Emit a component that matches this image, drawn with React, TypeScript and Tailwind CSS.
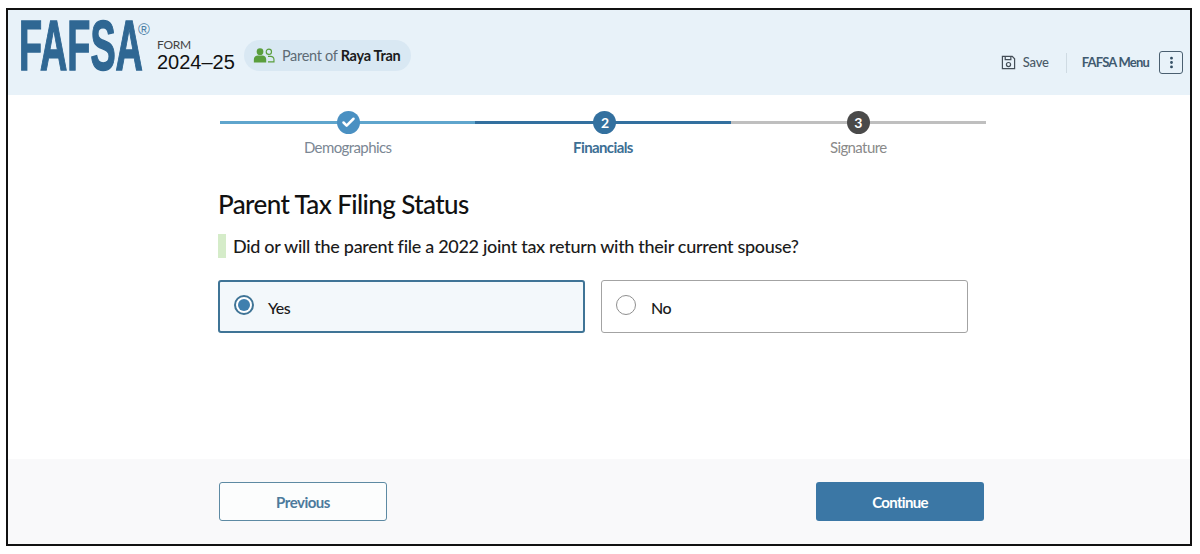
import { Check, EllipsisVertical } from 'lucide-react';

const bodyFont = "font-['Lato',sans-serif]";

function Step({ label, tone, num }: { label: string; tone: 'done' | 'current' | 'todo'; num?: number }) {
  const line = tone === 'done' ? 'bg-[#5fa5cd]' : tone === 'current' ? 'bg-[#33709f]' : 'bg-[#bfbfbf]';
  const circle = tone === 'done' ? 'bg-[#4a90c2] translate-x-[1px]' : tone === 'current' ? 'bg-[#33709f] translate-x-[2px]' : 'bg-[#4a4a4a]';
  const text =
    tone === 'done'
      ? 'text-[#7b8794]'
      : tone === 'current'
        ? 'text-[#3d6f94] font-bold'
        : 'text-[#8a8a8a]';
  return (
    <div className="flex w-[255.3px] flex-col items-center">
      <div className="relative flex h-[23px] w-full items-center justify-center">
        <div className={`absolute inset-x-0 top-[10px] h-[3px] ${line}`} />
        <div className={`relative flex h-[23px] w-[23px] items-center justify-center rounded-full ${circle}`}>
          {num ? (
            <span className="text-[14px] font-bold text-white">{num}</span>
          ) : (
            <Check className="h-[15px] w-[15px] text-white" strokeWidth={4} />
          )}
        </div>
      </div>
      <span className={`mt-[3px] text-[15px] leading-[20px] tracking-[-0.6px] ${text}`}>{label}</span>
    </div>
  );
}

function RadioCard({ label, selected }: { label: string; selected?: boolean }) {
  return (
    <div
      className={`flex h-[53px] w-[367px] items-center rounded-[3px] ${
        selected ? 'border-2 border-[#3f7496] bg-[#f3f8fb] pl-[14px]' : 'border border-[#a3a3a3] bg-white pl-[14px]'
      }`}
    >
      {selected ? (
        <span className="mb-[4px] flex h-[20px] w-[20px] items-center justify-center rounded-full border-2 border-[#3f7496] bg-white">
          <span className="h-[12px] w-[12px] rounded-full bg-[#3f7fae]" />
        </span>
      ) : (
        <span className="mb-[4px] h-[20px] w-[20px] rounded-full border border-[#8f8f8f] bg-white" />
      )}
      <span className={`mt-[2px] text-[16px] font-medium tracking-[-0.5px] text-[#1b1b1b] ${selected ? 'ml-[14px]' : 'ml-[15px]'}`}>
        {label}
      </span>
    </div>
  );
}

export default function App() {
  return (
    <div className={`h-[554px] w-[1200px] overflow-hidden bg-white pb-[8px] pl-[6px] pr-[8px] pt-[8px] ${bodyFont}`}>
      <div className="flex h-[538px] flex-col border-2 border-[#111111] bg-white">
        {/* Header */}
        <header className="flex h-[85px] items-start justify-between bg-[#e8f2f9] pl-[11px] pr-[7px]">
          <div className="flex items-start">
            <div className="relative mt-[9px] h-[52px] w-[129px]">
              <span className="block origin-top-left scale-x-[0.54] font-['Liberation_Sans',sans-serif] text-[70px] font-bold leading-[54px] text-[#2f6793] [-webkit-text-stroke:1.5px_#2f6793]">
                FAFSA
              </span>
              <span className="absolute left-[119px] top-[3px] font-['Liberation_Sans',sans-serif] text-[16px] leading-[16px] text-[#4b7fa6]">®</span>
            </div>
            <div className="ml-[9px] mt-[29px] flex flex-col">
              <span className="text-[12px] leading-[12px] tracking-[-0.3px] text-[#444444]">FORM</span>
              <span className="font-['Liberation_Sans',sans-serif] text-[20px] leading-[22px] text-[#111111]">2024–25</span>
            </div>
            <div className="ml-[9px] mt-[30px] flex h-[31px] w-[167px] items-center rounded-[16px] bg-[#d9e8f3] pl-[9px]">
              <svg viewBox="0 0 24 17" className="h-[15px] w-[22px]" aria-hidden="true">
                <circle cx="7.5" cy="4.2" r="3.8" fill="#5a9e3d" />
                <path d="M0.5 16.5v-3.5c0-2.6 2-4.4 4.5-4.4h5c2.5 0 4.5 1.8 4.5 4.4v3.5z" fill="#5a9e3d" />
                <circle cx="17.5" cy="4.2" r="3" fill="none" stroke="#5a9e3d" strokeWidth="1.3" />
                <path d="M16.5 15.8h6.8v-2.6c0-2.2-1.6-3.7-3.8-3.7h-3" fill="none" stroke="#5a9e3d" strokeWidth="1.3" />
              </svg>
              <span className="ml-[7px] text-[14.5px] tracking-[-0.3px] text-[#5e6b75]">
                Parent of <span className="font-bold text-[#1b1b1b]">Raya Tran</span>
              </span>
            </div>
          </div>
          <div className="mt-[41px] flex items-center">
            <svg viewBox="0 0 16 16" className="h-[15px] w-[15px]" fill="none" stroke="#444e57" strokeWidth="1.3" aria-hidden="true">
              <path d="M1.5 1.5h10.5l2.5 2.5v10.5h-13z" />
              <path d="M4.5 1.5v3.5h6v-3.5" />
              <circle cx="8" cy="10.2" r="2.2" />
            </svg>
            <span className="ml-[7px] text-[13px] font-medium tracking-[-0.2px] text-[#4a5a68]">Save</span>
            <div className="ml-[17px] h-[20px] w-px bg-[#cfdbe3]" />
            <span className="ml-[15px] text-[13px] font-bold tracking-[-0.8px] text-[#3f5a70]">FAFSA Menu</span>
            <div className="ml-[10px] flex h-[23px] w-[24px] items-center justify-center rounded-[3px] border border-[#4a5f70]">
              <EllipsisVertical className="h-[15px] w-[15px] text-[#2f4a60]" strokeWidth={2.5} />
            </div>
          </div>
        </header>

        {/* Main content */}
        <main className="flex flex-1 flex-col pl-[210px]">
          <div className="ml-[2px] mt-[16px] flex">
            <Step label="Demographics" tone="done" />
            <Step label="Financials" tone="current" num={2} />
            <Step label="Signature" tone="todo" num={3} />
          </div>
          <h1 className="mt-[30px] text-[26px] font-medium leading-[34px] tracking-[-0.6px] text-[#111111]">
            Parent Tax Filing Status
          </h1>
          <div className="mt-[13px] flex h-[24px] items-center">
            <div className="h-[24px] w-[8px] bg-[#d5ecc9]" />
            <p className="ml-[7px] text-[18px] font-medium leading-[24px] tracking-[-0.3px] text-[#1b1b1b]">
              Did or will the parent file a 2022 joint tax return with their current spouse?
            </p>
          </div>
          <div className="mt-[22px] flex gap-[16px]">
            <RadioCard label="Yes" selected />
            <RadioCard label="No" />
          </div>
        </main>

        {/* Footer */}
        <footer className="flex h-[85px] items-start bg-[#f9f9fa] pl-[211px] pt-[23px]">
          <button className="h-[39px] w-[168px] rounded-[3px] border border-[#5d8aa3] bg-[#fcfdfd] pt-[1px] text-[15px] font-bold tracking-[-0.5px] text-[#4d7a9c]">
            Previous
          </button>
          <button className="ml-[429px] h-[39px] w-[168px] rounded-[3px] bg-[#3b77a5] pt-[1px] text-[15px] font-bold tracking-[-0.7px] text-white">
            Continue
          </button>
        </footer>
      </div>
    </div>
  );
}
